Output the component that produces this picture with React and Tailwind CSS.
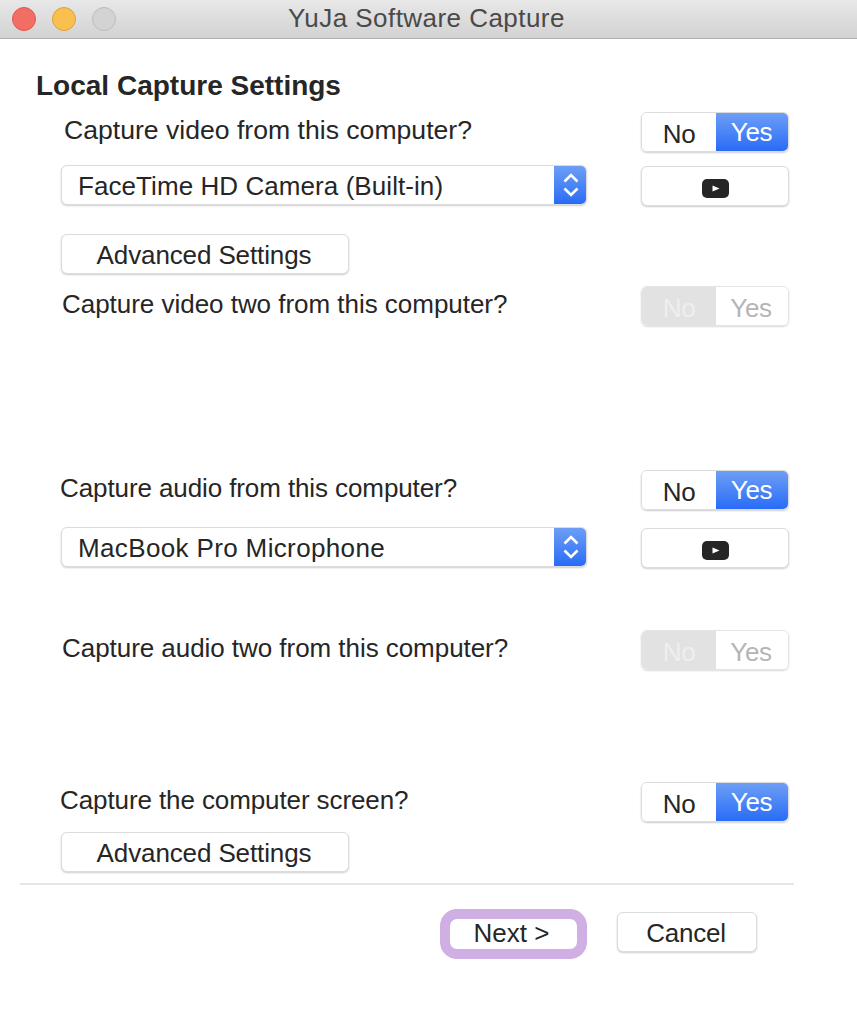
import React from "react";

function Toggle({ disabled }) {
  if (disabled) {
    return (
      <div className="flex h-10 w-[148px] overflow-hidden rounded-[6px] border border-[#e4e4e4] shadow-[0_1px_2px_rgba(0,0,0,0.14)] text-[26px] leading-[42px] tracking-[-0.3px]">
        <div className="w-[74px] bg-[#e2e2e2] text-center text-[#efefef]">No</div>
        <div className="flex-1 bg-white pr-0.5 text-center text-[#b5b5b5]">Yes</div>
      </div>
    );
  }
  return (
    <div className="flex h-10 w-[148px] overflow-hidden rounded-[6px] border border-[#dcdcdc] shadow-[0_1px_2px_rgba(0,0,0,0.2)] text-[26px] leading-[42px] tracking-[-0.3px]">
      <div className="w-[74px] bg-white text-center text-[#262626]">No</div>
      <div className="-my-px -mr-px flex-1 bg-gradient-to-b from-[#6f9ff5] to-[#2669f6] pr-0.5 text-center leading-[41px] text-white">Yes</div>
    </div>
  );
}

function PlayButton() {
  return (
    <div className="mt-px flex h-10 w-[148px] items-center justify-center rounded-[6px] border border-[#dcdcdc] bg-white pt-1 shadow-[0_1px_2px_rgba(0,0,0,0.2)]">
      <svg width="27" height="19" viewBox="0 0 27 19">
        <rect x="0" y="0" width="27" height="19" rx="5" fill="#262626" />
        <path d="M10.5 6.5 L17.5 9.5 L10.5 12.5 Z" fill="#fff" />
      </svg>
    </div>
  );
}

function Select({ label, tracking }) {
  return (
    <div className="ml-[61px] flex h-10 w-[526px] overflow-hidden rounded-[6px] border border-[#dcdcdc] bg-white shadow-[0_1px_2px_rgba(0,0,0,0.2)]">
      <div className={"flex-1 pl-4 text-[26px] leading-[40px] text-[#262626] " + tracking}>{label}</div>
      <div className="-my-px -mr-px flex w-[33px] items-center justify-center bg-gradient-to-b from-[#6f9ff5] to-[#2669f6]">
        <svg width="16" height="28" viewBox="0 0 16 28" fill="none" stroke="#fff" strokeWidth="2.6">
          <path d="M1.5 10.5 L8 4 L14.5 10.5" />
          <path d="M1.5 17.5 L8 24 L14.5 17.5" />
        </svg>
      </div>
    </div>
  );
}

function AdvancedButton() {
  return (
    <div className="ml-[61px] h-10 w-[288px] rounded-[6px] border border-[#dcdcdc] bg-white pr-0.5 text-center text-[26px] leading-10 tracking-[-0.12px] text-[#262626] shadow-[0_1px_2px_rgba(0,0,0,0.2)]">
      Advanced Settings
    </div>
  );
}

function Row({ children, className }) {
  return <div className={"flex " + className}>{children}</div>;
}

export default function App() {
  return (
    <div className="h-[1016px] w-[857px] overflow-hidden bg-white font-['Liberation_Sans',Arial,sans-serif]">
      <div className="relative flex h-[39px] items-center border-b border-[#b0b0b0] bg-gradient-to-b from-[#e8e8e8] to-[#d2d2d2]">
        <div className="ml-3 flex gap-4">
          <div className="h-6 w-6 rounded-full border border-[#e0584f] bg-[#f26d64]" />
          <div className="h-6 w-6 rounded-full border border-[#dfa23a] bg-[#f9c04f]" />
          <div className="h-6 w-6 rounded-full border border-[#bcbcbc] bg-[#d3d3d3]" />
        </div>
        <div className="absolute left-[288px] top-0 text-[26px] leading-[37px] tracking-[0.45px] text-[#4a4a4a]">
          YuJa Software Capture
        </div>
      </div>

      <h1 className="ml-[36px] mt-[30px] text-[28px] font-bold leading-[34px] text-[#262626]">Local Capture Settings</h1>

      <Row className="mt-[9px]">
        <div className="w-[641px] pl-[64px] text-[26.6px] leading-9 text-[#262626]">Capture video from this computer?</div>
        <Toggle />
      </Row>
      <Row className="mt-[13px] h-[41px]">
        <div className="w-[641px]"><Select label="FaceTime HD Camera (Built-in)" tracking="tracking-[0.07px]" /></div>
        <PlayButton />
      </Row>
      <div className="mt-[28px]"><AdvancedButton /></div>
      <Row className="mt-3">
        <div className="w-[641px] pl-[62px] text-[26px] leading-9 tracking-[-0.03px] text-[#262626]">Capture video two from this computer?</div>
        <Toggle disabled />
      </Row>
      <Row className="mt-[144px]">
        <div className="w-[641px] pl-[60px] text-[26px] leading-9 tracking-[-0.1px] text-[#262626]">Capture audio from this computer?</div>
        <Toggle />
      </Row>
      <Row className="mt-[17px] h-[41px]">
        <div className="w-[641px]"><Select label="MacBook Pro Microphone" tracking="tracking-[0.36px]" /></div>
        <PlayButton />
      </Row>
      <Row className="mt-[62px]">
        <div className="w-[641px] pl-[62px] text-[26px] leading-9 tracking-[-0.05px] text-[#262626]">Capture audio two from this computer?</div>
        <Toggle disabled />
      </Row>
      <Row className="mt-[112px]">
        <div className="w-[641px] pl-[60px] text-[26px] leading-9 tracking-[-0.1px] text-[#262626]">Capture the computer screen?</div>
        <Toggle />
      </Row>
      <div className="mt-[10px]"><AdvancedButton /></div>
      <div className="ml-5 mt-[11px] h-0.5 w-[774px] bg-[#e6e6e6]" />

      <div className="ml-[440px] mt-6 flex items-start">
        <div className="h-[50px] w-[147px] rounded-[17px] border-[10px] border-[#d0b0e4] bg-white pr-1 text-center text-[26px] leading-[28px] text-[#262626]">
          Next &gt;
        </div>
        <div className="ml-[30px] mt-[3px] h-10 w-[140px] rounded-[6px] border border-[#dcdcdc] bg-white pr-0.5 text-center text-[26px] leading-10 tracking-[-0.2px] text-[#262626] shadow-[0_1px_2px_rgba(0,0,0,0.2)]">
          Cancel
        </div>
      </div>
    </div>
  );
}
